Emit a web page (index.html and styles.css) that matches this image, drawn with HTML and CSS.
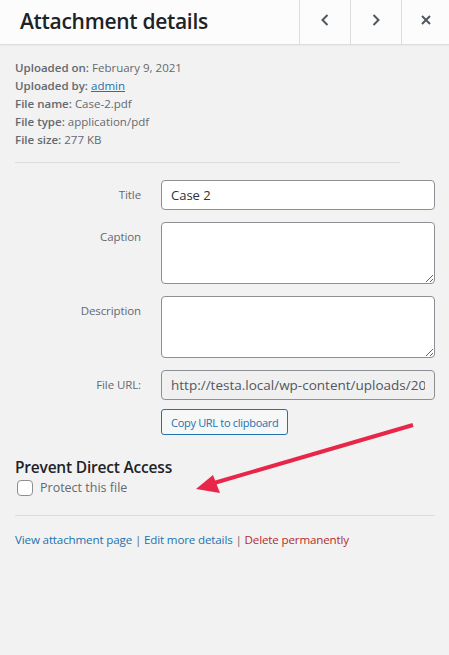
FILE: index.html
```html
<!DOCTYPE html>
<html lang="en">
<head>
<meta charset="utf-8">
<title>Attachment details</title>
<link rel="stylesheet" href="styles.css">
</head>
<body>
<div class="page">
  <header class="head">
    <h1 class="head-title">Attachment details</h1>
    <button class="head-btn" aria-label="Previous">
      <svg width="12" height="14" viewBox="0 0 12 14"><path d="M8.5 2 L3.5 7 L8.5 12" fill="none" stroke="#50575e" stroke-width="2"/></svg>
    </button>
    <button class="head-btn" aria-label="Next">
      <svg width="12" height="14" viewBox="0 0 12 14"><path d="M3.5 2 L8.5 7 L3.5 12" fill="none" stroke="#50575e" stroke-width="2"/></svg>
    </button>
    <button class="head-btn head-btn-last" aria-label="Close">
      <svg width="12" height="12" viewBox="0 0 12 12"><path d="M2 2 L10 10 M10 2 L2 10" fill="none" stroke="#50575e" stroke-width="2"/></svg>
    </button>
  </header>

  <section class="meta">
    <div><b>Uploaded on:</b> February 9, 2021</div>
    <div><b>Uploaded by:</b> <a href="#">admin</a></div>
    <div><b>File name:</b> Case-2.pdf</div>
    <div><b>File type:</b> application/pdf</div>
    <div><b>File size:</b> 277 KB</div>
  </section>

  <hr class="sep sep-short">

  <form class="fields">
    <label class="f-label">Title</label>
    <input class="f-input" type="text" value="Case 2">

    <label class="f-label">Caption</label>
    <textarea class="f-area"></textarea>

    <label class="f-label">Description</label>
    <textarea class="f-area"></textarea>

    <label class="f-label">File URL:</label>
    <div class="f-url-wrap">
      <input class="f-input f-url" type="text" readonly value="http://testa.local/wp-content/uploads/2021/02/Case-2.pdf">
      <button type="button" class="copy-btn">Copy URL to clipboard</button>
    </div>
  </form>

  <section class="pda">
    <h2 class="pda-title">Prevent Direct Access</h2>
    <label class="pda-check"><span class="box"></span>Protect this file</label>
  </section>

  <hr class="sep sep-long">

  <div class="links">
    <a href="#">View attachment page</a> <span class="bar">|</span> <a href="#">Edit more details</a> <span class="bar">|</span> <a href="#" class="del">Delete permanently</a>
  </div>

  <svg class="arrow" width="449" height="655" viewBox="0 0 449 655">
    <line x1="413" y1="425" x2="214" y2="483" stroke="#e8264a" stroke-width="4" stroke-linecap="butt"/>
    <polygon points="196,489 213,475 220,493" fill="#e8264a"/>
  </svg>
</div>
</body>
</html>
```

FILE: styles.css
```css
* { box-sizing: border-box; }
html, body { margin: 0; padding: 0; }
body {
  background: #f2f2f2;
  font-family: "Open Sans", "Noto Sans", sans-serif;
  color: #646970;
  width: 449px;
  height: 655px;
  overflow: hidden;
}
.page { position: relative; width: 449px; height: 655px; }

.head {
  display: flex;
  height: 45px;
  background: #fcfcfc;
  border-bottom: 1px solid #dcdcde;
  box-shadow: 0 1px 2px rgba(0,0,0,0.04);
  overflow: hidden;
}
.head-title {
  flex: 1;
  margin: 0;
  padding-left: 20px;
  font-size: 21px;
  font-weight: 600;
  line-height: 42px;
  color: #1d2327;
  letter-spacing: -0.3px;
}
.head-btn {
  flex: 0 0 51px;
  width: 51px;
  height: 44px;
  border: 0;
  border-left: 1px solid #dcdcde;
  background: transparent;
  padding: 0;
  display: flex;
  align-items: center;
  justify-content: center;
}
.head-btn svg { margin-top: -5px; }
.head-btn-last { flex-basis: 48px; }

.meta {
  padding: 14px 15px 0;
  font-size: 11.5px;
  line-height: 18px;
  color: #646970;
}
.meta b { font-weight: 600; }
.meta a { color: #2271b1; }

.sep {
  border: 0;
  border-top: 1px solid #dcdcde;
  margin: 0 0 0 15px;
  height: 0;
}
.sep-short { width: 385px; margin-top: 13px; }
.sep-long { width: 420px; margin-top: 17px; }

.fields {
  display: grid;
  grid-template-columns: 126px 274px;
  column-gap: 20px;
  row-gap: 12px;
  padding-left: 15px;
  margin-top: 17px;
}
.f-label {
  text-align: right;
  font-size: 11.5px;
  line-height: 18px;
  padding-top: 6px;
  color: #646970;
  letter-spacing: -0.1px;
}
.f-input, .f-area {
  width: 274px;
  border: 1px solid #8c8f94;
  border-radius: 4px;
  background: #fff;
  font-family: inherit;
  font-size: 13px;
  color: #2c3338;
  padding: 0 9px;
  margin: 0;
}
.f-input { height: 30px; }
.f-area { height: 62px; resize: vertical; display: block; }
.f-url { background: #f0f0f1; color: #50575e; display: block; font-size: 13.5px; }
.f-url-wrap { display: flex; flex-direction: column; align-items: flex-start; gap: 9px; }
.copy-btn {
  height: 26px;
  padding: 0 9px;
  border: 1px solid #2271b1;
  border-radius: 3px;
  background: #f6f7f7;
  color: #2271b1;
  font-family: inherit;
  font-size: 11px;
  letter-spacing: -0.3px;
}

.pda { padding: 22px 15px 0; }
.pda-title {
  margin: 0;
  font-size: 15.5px;
  font-weight: 600;
  line-height: 20px;
  color: #1d2327;
  letter-spacing: -0.2px;
}
.pda-check {
  display: flex;
  align-items: center;
  gap: 7px;
  font-size: 12.5px;
  color: #646970;
  padding-left: 2px;
  margin-top: 1px;
  line-height: 20px;
}
.box {
  width: 16px;
  height: 16px;
  border: 1px solid #8c8f94;
  border-radius: 4px;
  background: #fff;
}

.links {
  padding: 15px 15px 0;
  font-size: 11.6px;
  line-height: 18px;
  color: #646970;
  letter-spacing: -0.15px;
}
.links a { color: #2271b1; text-decoration: none; }
.links a.del { color: #b32d2e; }

.arrow { position: absolute; left: 0; top: 0; pointer-events: none; }
```
